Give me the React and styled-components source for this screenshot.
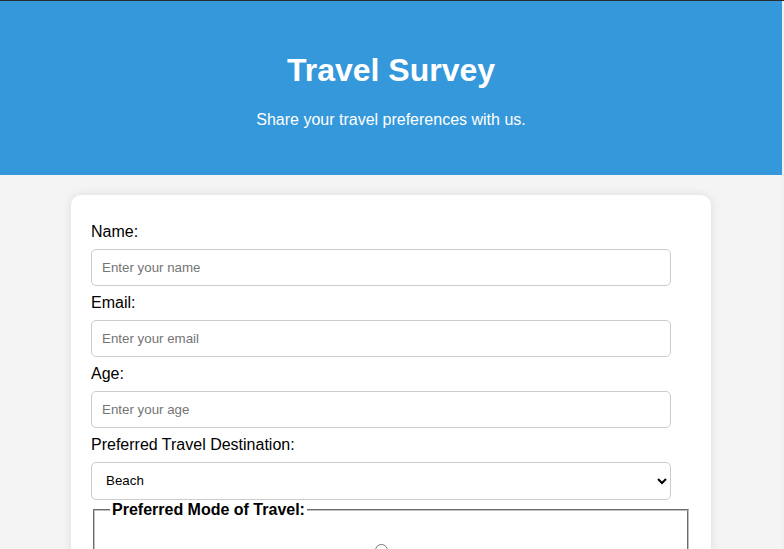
import React from "react";
import styled, { createGlobalStyle } from "styled-components";

const GlobalStyle = createGlobalStyle`
  html {
    background: #f0f0f0;
    border-top: 1px solid #2a2c2f;
  }
  body {
    margin: 0 2px 0 0;
    padding: 0;
    background: #f4f4f4;
    font-family: Arial, "Liberation Sans", sans-serif;
    color: #000;
  }
  ::-webkit-scrollbar {
    display: none;
  }
`;

const Header = styled.header`
  background: #3498db;
  color: #fff;
  text-align: center;
  padding: 30px;

  h1 {
    font-size: 32px;
    margin: 21.44px 0;
  }

  p {
    font-size: 16px;
    margin: 16px 0;
  }
`;

const Card = styled.main`
  max-width: 600px;
  margin: 20px auto;
  padding: 20px;
  background: #fff;
  border-radius: 10px;
  box-shadow: 0 0 10px rgba(0, 0, 0, 0.1);
`;

const Label = styled.label`
  display: block;
  margin: 8px 0;
  font-size: 16px;
`;

const TextInput = styled.input`
  display: block;
  box-sizing: border-box;
  width: calc(100% - 20px);
  margin: 0;
  padding: 10px;
  border: 1px solid #ccc;
  border-radius: 5px;
  font-family: Arial, "Liberation Sans", sans-serif;
  font-size: 13.333px;
  line-height: normal;

  &::placeholder {
    color: #757575;
  }
`;

const Select = styled.select`
  display: block;
  box-sizing: border-box;
  width: calc(100% - 20px);
  height: 38px;
  margin: 0;
  padding: 0 10px;
  border: 1px solid #ccc;
  border-radius: 5px;
  background: #fff;
  font-family: Arial, "Liberation Sans", sans-serif;
  font-size: 13.333px;
  color: #000;
`;

const Fieldset = styled.fieldset`
  margin: 1px 2px 0;
  padding: 6px 15px 10px;
  border: 2px groove #c0c0c0;

  legend {
    font-weight: bold;
    font-size: 16px;
    padding: 0 2px;
  }
`;

const Option = styled.label`
  display: flex;
  flex-direction: column;
  align-items: center;
  width: calc(100% - 20px);
  margin: 19px 0 8px;
  font-size: 16px;

  input {
    margin: 0 0 6px;
    width: 13px;
    height: 13px;
  }
`;

const modes = ["Airplane", "Train", "Car", "Bus"];

export default function App() {
  return (
    <>
      <GlobalStyle />
      <Header>
        <h1>Travel Survey</h1>
        <p>Share your travel preferences with us.</p>
      </Header>
      <Card>
        <form>
          <Label htmlFor="name">Name:</Label>
          <TextInput id="name" type="text" placeholder="Enter your name" />
          <Label htmlFor="email">Email:</Label>
          <TextInput id="email" type="email" placeholder="Enter your email" />
          <Label htmlFor="age">Age:</Label>
          <TextInput id="age" type="number" placeholder="Enter your age" />
          <Label htmlFor="destination">Preferred Travel Destination:</Label>
          <Select id="destination" defaultValue="beach">
            <option value="beach">Beach</option>
            <option value="mountains">Mountains</option>
            <option value="city">City</option>
            <option value="countryside">Countryside</option>
          </Select>
          <Fieldset>
            <legend>Preferred Mode of Travel:</legend>
            {modes.map((m) => (
              <Option key={m}>
                <input type="radio" name="mode" value={m.toLowerCase()} />
                {m}
              </Option>
            ))}
          </Fieldset>
        </form>
      </Card>
    </>
  );
}
